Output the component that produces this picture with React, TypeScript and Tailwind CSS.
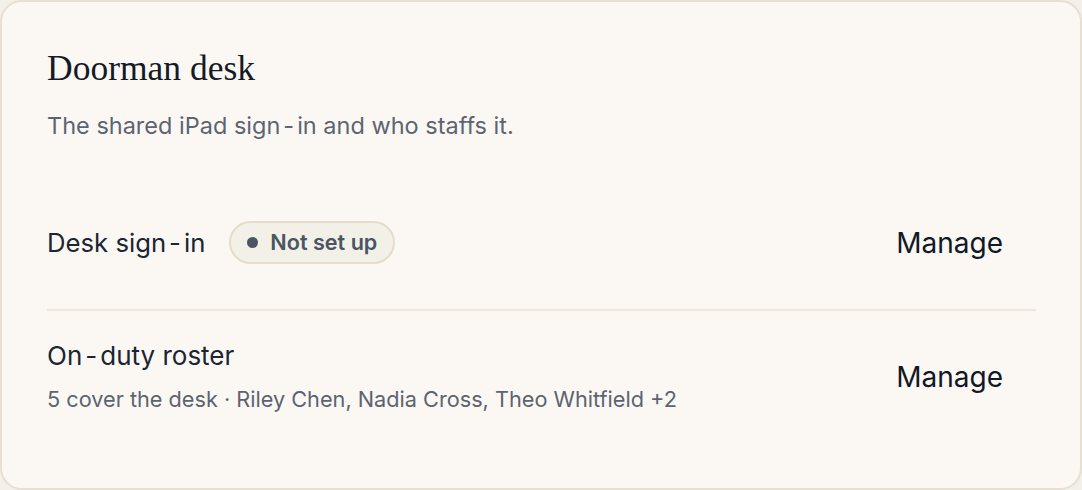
import React from 'react';

const sans = { fontFamily: 'Inter, "Noto Sans", sans-serif' };

// the hyphen sits with a bit of air on each side in the design
const Hy = () => <span className="mx-[3px]">-</span>;

const App: React.FC = () => {
  return (
    <div className="w-[1082px] h-[490px] bg-[#f3f0e9]" style={sans}>
      <section className="h-full rounded-[22px] border-2 border-[#e7dfd0] bg-[#fbf8f3] pl-[45px] pr-[44px] pt-[46px]">
        <h2 className="text-[35.5px] leading-[40px] text-[#141b26]" style={{ fontFamily: '"Liberation Serif", serif' }}>
          Doorman desk
        </h2>
        <p className="mt-[22px] text-[23.5px] leading-[32px] text-[#5b6472]">
          The shared iPad sign<Hy />in and who staffs it.
        </p>

        <div className="mt-[34px] flex items-center justify-between py-[45px] border-b-2 border-[#ede7dc]">
          <div className="flex items-center gap-[24px]">
            <span className="text-[25.7px] leading-[32px] text-[#1b2533]">Desk sign<Hy />in</span>
            <span className="flex items-center gap-[12px] h-[43px] pl-[16px] pr-[16px] rounded-full border-2 border-[#e6dccb] bg-[#f3f0e8] text-[21.6px] font-semibold text-[#4b5563]">
              <span className="w-[11px] h-[11px] rounded-full bg-[#4b5563]" />
              Not set up
            </span>
          </div>
          <button className="px-[33px] text-[28px] leading-[32px] text-[#111827]">Manage</button>
        </div>

        <div className="flex items-center justify-between pt-[29px]">
          <div>
            <div className="text-[26px] leading-[32px] text-[#1b2533]">On<Hy />duty roster</div>
            <div className="mt-[13px] text-[21.7px] leading-[28px] text-[#5b6472]">
              5 cover the desk · Riley Chen, Nadia Cross, Theo Whitfield +2
            </div>
          </div>
          <button className="px-[33px] text-[28px] leading-[32px] text-[#111827]">Manage</button>
        </div>
      </section>
    </div>
  );
};

export default App;
